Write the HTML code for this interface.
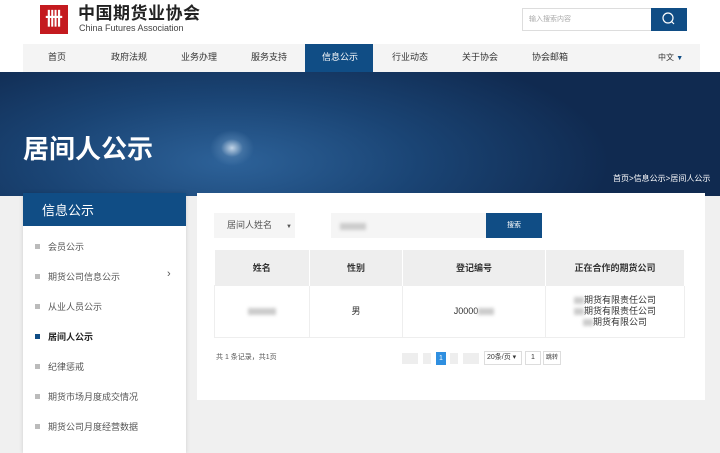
<!DOCTYPE html>
<html><head><meta charset="utf-8"><style>
*{margin:0;padding:0;box-sizing:border-box}
body{width:720px;height:448px;overflow:hidden;background:#f0f0f0;font-family:"Liberation Sans","Noto Sans CJK SC",sans-serif;position:relative;color:#333}
.hdr{position:absolute;left:0;top:0;width:720px;height:44px;background:#fff}
.nav{position:absolute;left:0;top:44px;width:720px;height:28px;background:#fff}
.navin{position:absolute;left:23px;top:0;width:677px;height:28px;background:#f4f4f4}
.nav span{position:absolute;top:8px;font-size:9px;color:#333;line-height:11px}
.banner{position:absolute;left:0;top:72px;width:720px;height:124px;background:radial-gradient(ellipse 22px 18px at 232px 76px,rgba(210,225,240,.9) 0%,rgba(90,135,180,.5) 50%,rgba(40,80,130,0) 100%),radial-gradient(ellipse 380px 130px at 230px 90px,#2d6299 0%,#1a4474 50%,#102a50 100%)}
.side{position:absolute;left:23px;top:193px;width:163px;height:260px;background:#fff;box-shadow:0 0 4px rgba(0,0,0,.15)}
.sh{height:33px;background:#104d85;color:#fff;font-size:13px;line-height:15px;padding:10px 0 0 19px}
.side div.it{position:absolute;left:12px;font-size:9px;color:#555;line-height:11px}
.side div.it i{display:inline-block;width:5px;height:5px;background:#bbb;margin-right:8px;vertical-align:1px}
.main{position:absolute;left:197px;top:193px;width:508px;height:207px;background:#fff}
table{position:absolute;left:17px;top:57px;width:471px;border-collapse:collapse;font-size:9px}
th{background:#eee;height:35px;font-weight:bold;color:#333;border-right:1px solid #fff}
td{height:52px;text-align:center;border:1px solid #eee;line-height:11px}
.blur{display:inline-block;background:#ccc;filter:blur(1.5px);height:7px;vertical-align:middle}
</style></head><body>
<div class="hdr">
 <div style="position:absolute;left:40px;top:5px;width:28px;height:29px;background:#c41a1f;color:#fff;font-size:18px;font-weight:bold;text-align:center;line-height:29px">卌</div>
 <div style="position:absolute;left:78px;top:4px;font-size:17px;line-height:20px;font-weight:bold;color:#222;letter-spacing:.5px">中国期货业协会</div>
 <div style="position:absolute;left:79px;top:23px;font-size:9px;line-height:11px;color:#444">China Futures Association</div>
 <div style="position:absolute;left:522px;top:8px;width:130px;height:23px;border:1px solid #ddd;font-size:7px;line-height:9px;color:#aaa;padding:6px 0 0 6px">输入搜索内容</div>
 <div style="position:absolute;left:651px;top:8px;width:36px;height:23px;background:#104d85"><svg width="36" height="23"><circle cx="17" cy="10" r="5" fill="none" stroke="#fff" stroke-width="1.2"/><line x1="20.5" y1="13.5" x2="23" y2="16" stroke="#fff" stroke-width="1.2"/></svg></div>
</div>
<div class="nav"><div class="navin"></div>
 <span style="left:48px">首页</span><span style="left:111px">政府法规</span><span style="left:181px">业务办理</span><span style="left:251px">服务支持</span>
 <div style="position:absolute;left:305px;top:0;width:68px;height:28px;background:#104d85"></div><span style="left:322px;color:#fff">信息公示</span>
 <span style="left:392px">行业动态</span><span style="left:462px">关于协会</span><span style="left:532px">协会邮箱</span><span style="left:658px;font-size:8px">中文 <b style="color:#104d85;font-size:7px">▼</b></span>
</div>
<div class="banner">
 <div style="position:absolute;left:23px;top:62px;font-size:26px;line-height:30px;font-weight:bold;color:#fff">居间人公示</div>
 <div style="position:absolute;left:613px;top:102px;font-size:8px;line-height:10px;color:#fff">首页&gt;信息公示&gt;居间人公示</div>
</div>
<div class="side"><div class="sh">信息公示</div>
 <div class="it" style="top:49px"><i></i>会员公示</div>
 <div class="it" style="top:79px"><i></i>期货公司信息公示</div>
 <div style="position:absolute;left:144px;top:75px;font-size:11px;color:#555">›</div>
 <div class="it" style="top:109px"><i></i>从业人员公示</div>
 <div class="it" style="top:139px;color:#222;font-weight:bold"><i style="background:#104d85"></i>居间人公示</div>
 <div class="it" style="top:169px"><i></i>纪律惩戒</div>
 <div class="it" style="top:199px"><i></i>期货市场月度成交情况</div>
 <div class="it" style="top:229px"><i></i>期货公司月度经营数据</div>
</div>
<div class="main">
 <div style="position:absolute;left:17px;top:20px;width:81px;height:25px;background:#f5f5f5;font-size:9px;line-height:11px;color:#555;padding:7px 0 0 13px">居间人姓名<span style="font-size:6px;margin-left:14px">▼</span></div>
 <div style="position:absolute;left:134px;top:20px;width:155px;height:25px;background:#f5f5f5"><span class="blur" style="width:26px;margin:9px 0 0 9px"></span></div>
 <div style="position:absolute;left:289px;top:20px;width:56px;height:25px;background:#104d85;color:#fff;font-size:7px;text-align:center;line-height:25px">搜索</div>
 <table><tr><th style="width:95px">姓名</th><th style="width:93px">性别</th><th style="width:143px">登记编号</th><th>正在合作的期货公司</th></tr>
 <tr><td><span class="blur" style="width:28px"></span></td><td>男</td><td>J0000<span class="blur" style="width:16px"></span></td><td><span class="blur" style="width:10px"></span>期货有限责任公司<br><span class="blur" style="width:10px"></span>期货有限责任公司<br><span class="blur" style="width:10px"></span>期货有限公司</td></tr></table>
 <div style="position:absolute;left:19px;top:160px;font-size:7px;line-height:9px;color:#555">共 1 条记录，共1页</div>
 <div style="position:absolute;left:205px;top:160px;width:16px;height:11px;background:#eee"></div>
 <div style="position:absolute;left:226px;top:160px;width:8px;height:11px;background:#eee"></div>
 <div style="position:absolute;left:239px;top:159px;width:10px;height:13px;background:#2f8fe0;color:#fff;font-size:7px;text-align:center;line-height:13px">1</div>
 <div style="position:absolute;left:253px;top:160px;width:8px;height:11px;background:#eee"></div>
 <div style="position:absolute;left:266px;top:160px;width:16px;height:11px;background:#eee"></div>
 <div style="position:absolute;left:287px;top:158px;width:38px;height:14px;border:1px solid #ddd;font-size:7px;line-height:12px;padding-left:2px">20条/页 ▾</div>
 <div style="position:absolute;left:328px;top:158px;width:16px;height:14px;border:1px solid #ddd;font-size:7px;text-align:center;line-height:12px">1</div>
 <div style="position:absolute;left:346px;top:158px;width:18px;height:14px;border:1px solid #ddd;font-size:6px;text-align:center;line-height:12px">跳转</div>
</div>
</body></html>
